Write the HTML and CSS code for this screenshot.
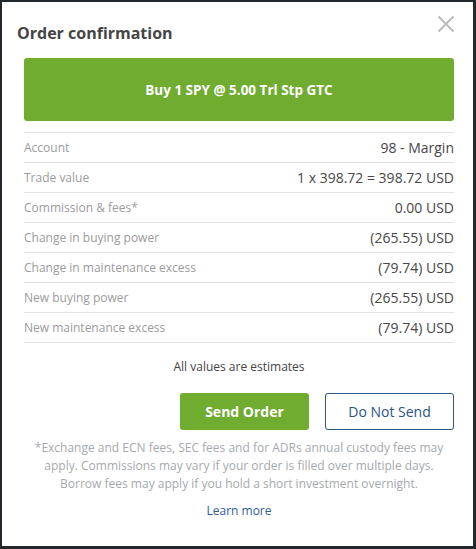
FILE: index.html
```html
<!DOCTYPE html>
<html>
<head>
<meta charset="utf-8">
<link rel="stylesheet" href="styles.css">
</head>
<body>
<div class="dialog">
  <div class="header">
    <h1 class="title">Order confirmation</h1>
    <button class="close" aria-label="Close">
      <svg width="18" height="18" viewBox="0 0 18 18"><path d="M1.5 1.5 L16.5 16.5 M16.5 1.5 L1.5 16.5" stroke="#b9bcbf" stroke-width="2" fill="none"/></svg>
    </button>
  </div>
  <div class="content">
    <div class="banner">Buy 1 SPY @ 5.00 Trl Stp GTC</div>
    <div class="rows">
      <div class="row"><span class="label">Account</span><span class="value">98 - Margin</span></div>
      <div class="row"><span class="label">Trade value</span><span class="value">1 x 398.72 = 398.72 USD</span></div>
      <div class="row"><span class="label">Commission &amp; fees*</span><span class="value">0.00 USD</span></div>
      <div class="row"><span class="label">Change in buying power</span><span class="value">(265.55) USD</span></div>
      <div class="row"><span class="label">Change in maintenance excess</span><span class="value">(79.74) USD</span></div>
      <div class="row"><span class="label">New buying power</span><span class="value">(265.55) USD</span></div>
      <div class="row"><span class="label">New maintenance excess</span><span class="value">(79.74) USD</span></div>
    </div>
    <p class="estimates">All values are estimates</p>
    <div class="actions">
      <button class="btn btn-primary">Send Order</button>
      <button class="btn btn-secondary">Do Not Send</button>
    </div>
    <p class="footnote">*Exchange and ECN fees, SEC fees and for ADRs annual custody fees may apply. Commissions may vary if your order is filled over multiple days. Borrow fees may apply if you hold a short investment overnight.</p>
    <p class="learn"><a href="#" class="learn-link">Learn more</a></p>
  </div>
</div>
</body>
</html>
```
FILE: styles.css
```css
html, body {
  margin: 0;
  padding: 0;
  background: #22282c;
  height: 549px;
  overflow: hidden;
}
body {
  font-family: "Open Sans", "Noto Sans", sans-serif;
  color: #444;
}
.dialog {
  margin: 2px 3px 0 2px;
  height: 544px;
  background: #fff;
  box-sizing: border-box;
  position: relative;
}
.header {
  padding: 21px 16px 0 15px;
  height: 35px;
  box-sizing: content-box;
}
.title {
  margin: 0;
  font-size: 16px;
  font-weight: 700;
  line-height: 20px;
  color: #454545;
}
.close {
  position: absolute;
  right: 18px;
  top: 13px;
  border: 0;
  background: none;
  padding: 0;
  width: 18px;
  height: 18px;
  cursor: pointer;
}
.close svg { display: block; }
.content {
  padding: 0 19px 0 22px;
}
.banner {
  height: 63px;
  background: #6fac30;
  border-radius: 3px;
  color: #fff;
  font-weight: 700;
  font-size: 13.5px;
  display: flex;
  align-items: center;
  justify-content: center;
}
.rows {
  margin-top: 11px;
  border-top: 1px solid #e3e3e3;
}
.row {
  height: 29px;
  border-bottom: 1px solid #e3e3e3;
  display: flex;
  align-items: center;
  justify-content: space-between;
}
.label {
  font-size: 12px;
  color: #9b9b9b;
}
.value {
  font-size: 14px;
  color: #474747;
}
.estimates {
  margin: 15px 0 0;
  text-align: center;
  font-size: 12px;
  line-height: 17px;
  color: #444;
}
.actions {
  margin-top: 18px;
  display: flex;
  justify-content: flex-end;
  gap: 16px;
}
.btn {
  width: 129px;
  height: 37px;
  border-radius: 3px;
  font-family: "Open Sans", "Noto Sans", sans-serif;
  font-size: 14px;
  box-sizing: border-box;
  cursor: pointer;
}
.btn-primary {
  background: #6fac30;
  border: 0;
  color: #fff;
  font-weight: 700;
}
.btn-secondary {
  background: #fff;
  border: 1px solid #2b5384;
  color: #2b5384;
}
.footnote {
  margin: 9px 0 0;
  text-align: center;
  font-size: 12px;
  line-height: 18px;
  color: #a5a9ad;
}
.learn {
  margin: 9px 0 0;
  text-align: center;
  font-size: 12px;
  line-height: 17px;
}
.learn-link {
  color: #2c5c98;
  text-decoration: none;
}
```
